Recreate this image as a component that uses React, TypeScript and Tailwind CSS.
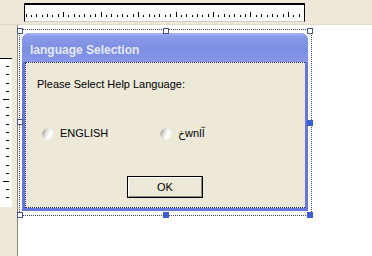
import React from "react";

function HRuler() {
  const ticks: React.ReactElement[] = [];
  const step = 37.5 / 7;
  for (let i = 0; i < 53; i++) {
    const x = Math.round(0.5 + i * step);
    if (x > 278) break;
    const j = i % 7;
    let y = 10;
    let h = 2;
    if (j === 0 && i > 0) {
      y = 7;
      h = 5;
    } else if (j % 2 === 0) {
      y = 9;
      h = 3;
    }
    ticks.push(<rect key={i} x={x} y={y} width={1} height={h} fill="#000" />);
  }
  return (
    <svg width="280" height="17" className="block">
      {ticks}
    </svg>
  );
}

function VRuler() {
  const ticks: React.ReactElement[] = [];
  for (let n = -4; n <= 13; n++) {
    const yAbs = 99 + 8.2 * n;
    const y = Math.round(yAbs - 59);
    if (y < 2 || y > 146) continue;
    const long = n % 10 === 0;
    ticks.push(
      <rect key={n} x={long ? 3 : 6} y={y} width={long ? 6 : 3} height={1} fill="#000" />
    );
  }
  return (
    <svg width="12" height="148" className="block">
      {ticks}
    </svg>
  );
}

function Radio() {
  return (
    <svg width="12" height="12" viewBox="0 0 12 12" className="block shrink-0">
      <defs>
        <linearGradient id="rg" x1="0" y1="0.3" x2="1" y2="0.7">
          <stop offset="0%" stopColor="#9c9c98" />
          <stop offset="30%" stopColor="#dcdcd6" />
          <stop offset="60%" stopColor="#ffffff" />
          <stop offset="100%" stopColor="#f2f1ea" />
        </linearGradient>
      </defs>
      <circle cx="6" cy="6" r="5.7" fill="url(#rg)" />
    </svg>
  );
}

function Handle({ className, blue }: { className: string; blue?: boolean }) {
  return (
    <div
      className={
        "absolute w-[6px] h-[6px] border " +
        (blue ? "bg-[#3b5fd0] border-[#3b5fd0] " : "bg-white border-[#4a5490] ") +
        className
      }
    />
  );
}

export default function App() {
  return (
    <div className="w-[372px] h-[256px] overflow-hidden bg-white flex flex-col font-['Liberation_Sans','DejaVu_Sans',sans-serif] text-black">
      {/* top band with ruler */}
      <div className="h-[25px] shrink-0 bg-[#ECE9D8] border-b border-[#dedbcb]">
        <div className="ml-[24px] mt-[3px] w-[281px] h-[19px] bg-white border-t-2 border-l border-r border-black border-b border-b-[#cfccbd]">
          <HRuler />
        </div>
      </div>

      <div className="flex flex-1 min-h-0">
        {/* left strip */}
        <div className="w-[18px] shrink-0 bg-[#ECE9D8] border-r border-[#8a8878]">
          <div className="mt-[33px] w-[12px] h-[149px] bg-white border-t border-black">
            <VRuler />
          </div>
        </div>

        {/* canvas */}
        <div className="flex-1 bg-white">
          <div className="relative ml-[1px] mt-[4px] w-[293px] h-[187px] border border-dotted border-[#3c4682] pl-[2px] pt-[3px] pr-[3px] pb-[3px]">
            {/* dialog */}
            <div className="w-[286px] h-[178px] bg-[#6577da] rounded-t-[7px] flex flex-col overflow-hidden">
              <div className="h-[29px] shrink-0 rounded-t-[7px] bg-[linear-gradient(to_bottom,#aab8f4_0%,#8a9ae8_12%,#7d8fe3_55%,#8696e8_100%)] pl-[8px] pt-[10px]">
                <div className="text-[12px] leading-[14px] font-bold text-[#e4eafc]">
                  language Selection
                </div>
              </div>
              <div className="flex-1 mx-[3px] mb-[3px] bg-[#ECE9D8] border-t border-l border-b border-dotted border-[#1f2870] flex flex-col text-[11px] leading-[13px]">
                <div className="ml-[11px] mt-[15px]">Please Select Help Language:</div>
                <div className="flex items-center mt-[36px] h-[13px]">
                  <div className="ml-[16px] w-[118px] flex items-center">
                    <Radio />
                    <span className="ml-[6px]">ENGLISH</span>
                  </div>
                  <div className="flex items-center">
                    <Radio />
                    <span className="ml-[6px]">
                      {"\u062Ewnl\u0622"}
                    </span>
                  </div>
                </div>
                <div className="ml-[101px] mt-[36px] w-[76px] h-[22px] border border-black bg-[#ECE9D8]">
                  <div className="w-full h-full border-t border-l border-white border-r border-b border-r-[#8a8878] border-b-[#8a8878] flex items-center justify-center">
                    OK
                  </div>
                </div>
              </div>
            </div>

            <Handle className="left-[-3px] top-[-2px]" />
            <Handle className="left-[143px] top-[-2px]" />
            <Handle className="right-[-2px] top-[-2px]" />
            <Handle className="left-[-3px] top-[89px]" />
            <Handle className="right-[-2px] top-[90px]" blue />
            <Handle className="left-[-3px] bottom-[-3px]" />
            <Handle className="left-[143px] bottom-[-3px]" blue />
            <Handle className="right-[-2px] bottom-[-3px]" blue />
          </div>
        </div>
      </div>
    </div>
  );
}
